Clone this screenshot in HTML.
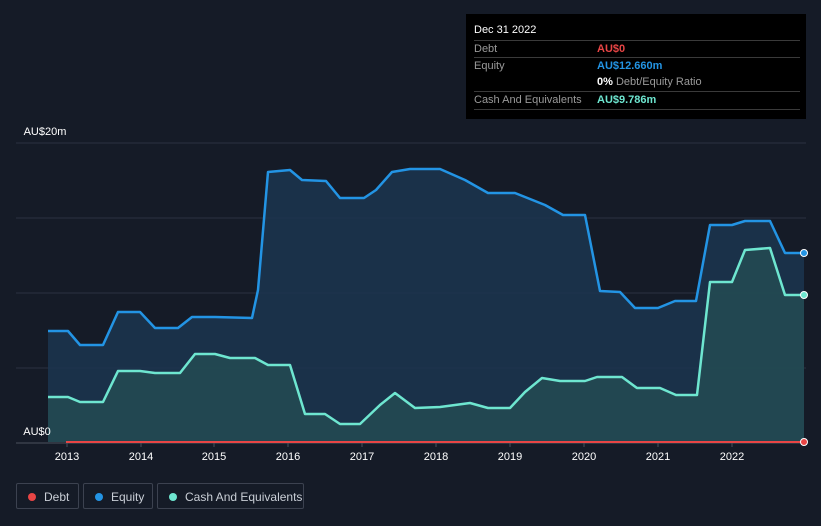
<!DOCTYPE html>
<html><head><style>
body{margin:0;width:821px;height:526px;background:#151b27;font-family:"Liberation Sans",sans-serif;overflow:hidden;position:relative}
.tip{position:absolute;left:466px;top:14px;width:340px;height:105px;background:#000;color:#fff;font-size:11px}
.row{position:absolute;left:8px;right:6px;height:17px;border-top:1px solid #3a3a3a;line-height:17px;color:#9a9a9a}
.row span{position:absolute;left:123px;font-weight:bold}
.leg{position:absolute;top:483px;height:26px;border:1px solid #3c4250;border-radius:2px;color:#c9ced6;font-size:12px;line-height:26px;box-sizing:border-box}
.leg i{position:absolute;left:11px;top:9px;width:8px;height:8px;border-radius:50%}
.leg b{font-weight:normal;position:absolute;left:27px}
</style></head><body>
<svg width="821" height="526" style="position:absolute;left:0;top:0">
<g stroke="#2b3140" stroke-width="1">
<line x1="16" y1="143" x2="806" y2="143"/><line x1="16" y1="218" x2="806" y2="218"/><line x1="16" y1="293" x2="806" y2="293"/><line x1="16" y1="368" x2="806" y2="368"/>
</g>
<line x1="16" y1="443" x2="806" y2="443" stroke="#4a505c"/>
<polygon fill="#1b3550" fill-opacity="0.85" points="48,442 48,331 68,331 80,345 103,345 118,312 140,312 155,328 178,328 192,317 215,317 252,318 258,290 268,172 290,170 302,180 326,181 340,198 364,198 376,190 392,172 410,169 440,169 465,180 488,193 515,193 545,205 563,215 585,215 600,291 620,292 635,308 658,308 675,301 696,301 710,225 732,225 745,221 770,221 785,253 804,253 804,442"/>
<polygon fill="#234a52" fill-opacity="0.9" points="48,442 48,397 68,397 80,402 103,402 118,371 140,371 155,373 180,373 195,354 215,354 230,358 255,358 268,365 290,365 305,414 325,414 340,424 360,424 380,405 395,393 415,408 440,407 470,403 488,408 510,408 525,392 542,378 560,381 585,381 597,377 622,377 637,388 660,388 676,395 697,395 710,282 732,282 745,250 770,248 785,295 804,295 804,442"/>
<polyline fill="none" stroke="#2394e4" stroke-width="2.5" stroke-linejoin="round" points="48,331 68,331 80,345 103,345 118,312 140,312 155,328 178,328 192,317 215,317 252,318 258,290 268,172 290,170 302,180 326,181 340,198 364,198 376,190 392,172 410,169 440,169 465,180 488,193 515,193 545,205 563,215 585,215 600,291 620,292 635,308 658,308 675,301 696,301 710,225 732,225 745,221 770,221 785,253 804,253"/>
<polyline fill="none" stroke="#6ee6d0" stroke-width="2.5" stroke-linejoin="round" points="48,397 68,397 80,402 103,402 118,371 140,371 155,373 180,373 195,354 215,354 230,358 255,358 268,365 290,365 305,414 325,414 340,424 360,424 380,405 395,393 415,408 440,407 470,403 488,408 510,408 525,392 542,378 560,381 585,381 597,377 622,377 637,388 660,388 676,395 697,395 710,282 732,282 745,250 770,248 785,295 804,295"/>
<line x1="66" y1="442" x2="804" y2="442" stroke="#e84545" stroke-width="2"/>
<circle cx="804" cy="253" r="3.5" fill="#2394e4" stroke="#fff" stroke-width="1"/>
<circle cx="804" cy="295" r="3.5" fill="#6ee6d0" stroke="#fff" stroke-width="1"/>
<circle cx="804" cy="442" r="3.5" fill="#e84545" stroke="#fff" stroke-width="1"/>
<g stroke="#4a505c"><line x1="67" y1="443" x2="67" y2="447"/><line x1="141" y1="443" x2="141" y2="447"/><line x1="214" y1="443" x2="214" y2="447"/><line x1="288" y1="443" x2="288" y2="447"/><line x1="362" y1="443" x2="362" y2="447"/><line x1="436" y1="443" x2="436" y2="447"/><line x1="510" y1="443" x2="510" y2="447"/><line x1="584" y1="443" x2="584" y2="447"/><line x1="658" y1="443" x2="658" y2="447"/><line x1="732" y1="443" x2="732" y2="447"/></g>
<g fill="#fff" font-size="11" font-family="Liberation Sans" text-anchor="middle">
<text x="67" y="460">2013</text><text x="141" y="460">2014</text><text x="214" y="460">2015</text><text x="288" y="460">2016</text><text x="362" y="460">2017</text><text x="436" y="460">2018</text><text x="510" y="460">2019</text><text x="584" y="460">2020</text><text x="658" y="460">2021</text><text x="732" y="460">2022</text>
<text x="45" y="135">AU$20m</text><text x="37" y="435">AU$0</text>
</g>
</svg>
<div class="tip">
<div style="position:absolute;left:8px;top:10px;font-size:11px">Dec 31 2022</div>
<div class="row" style="top:26px">Debt<span style="color:#e84545">AU$0</span></div>
<div class="row" style="top:43px">Equity<span style="color:#2394e4">AU$12.660m</span></div>
<div class="row" style="top:60px;border-top:none"><span style="color:#fff">0% <em style="font-style:normal;font-weight:normal;color:#9a9a9a">Debt/Equity Ratio</em></span></div>
<div class="row" style="top:77px">Cash And Equivalents<span style="color:#6ee6d0">AU$9.786m</span></div>
<div class="row" style="top:95px;height:0"></div>
</div>
<div class="leg" style="left:16px;width:63px"><i style="background:#e84545"></i><b>Debt</b></div>
<div class="leg" style="left:83px;width:70px"><i style="background:#2394e4"></i><b>Equity</b></div>
<div class="leg" style="left:157px;width:147px"><i style="background:#6ee6d0"></i><b>Cash And Equivalents</b></div>
</body></html>
